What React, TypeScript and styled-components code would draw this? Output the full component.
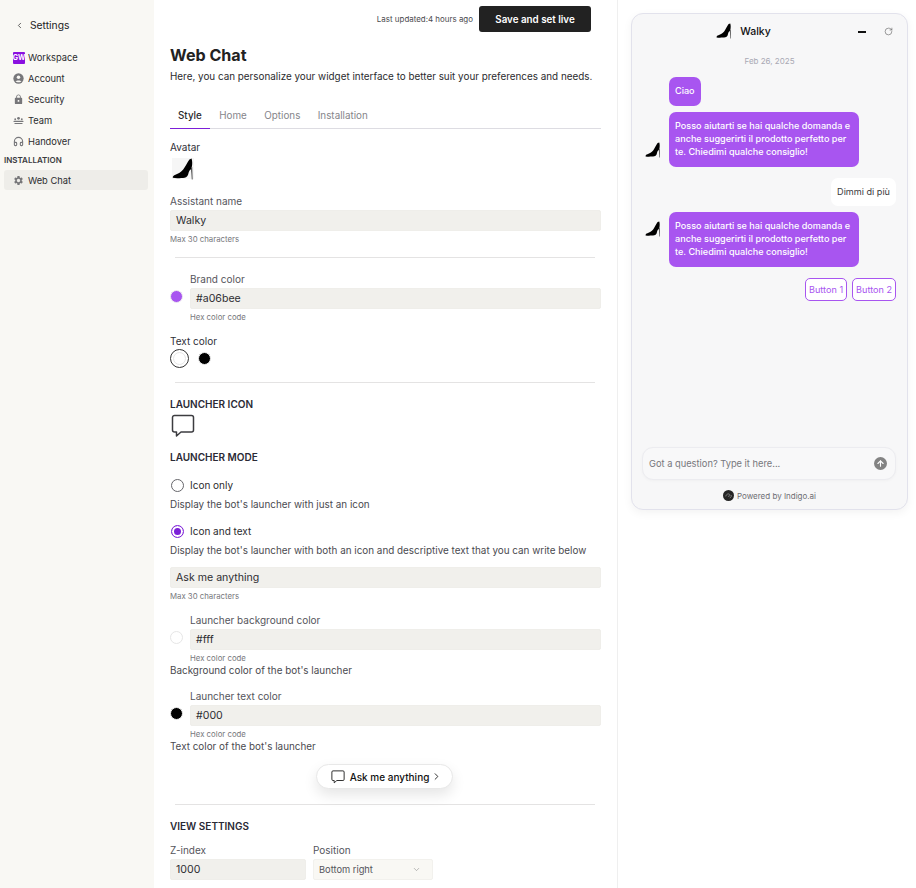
import React from 'react'
import styled, { createGlobalStyle } from 'styled-components'
import { ChevronDown, ChevronLeft, ChevronRight, Headphones, ArrowUp, RotateCw } from 'lucide-react'
import { MdLock, MdSettings } from 'react-icons/md'

const GlobalStyle = createGlobalStyle`
  html, body {
    margin: 0;
    padding: 0;
    height: 888px;
    overflow: hidden;
    background: #fff;
    font-family: Inter, "Liberation Sans", sans-serif;
    color: #1d1d1f;
  }
  * { box-sizing: border-box; }
`

function Heel({ size = 22 }: { size?: number }): JSX.Element {
  return (
    <svg width={size} height={size} viewBox="0 0 22 22">
      <path
        fill="#000"
        d="M0.8 19.8 C0.5 18.2 1.8 17.4 3.4 16.8 C6.4 15.6 9 14.4 11.2 11.6 C13.2 8.8 15.2 4.6 17.4 1.4 L19.6 0.6 C20.4 3.4 20.4 6.4 19.8 9 L18.8 11.4 C17.6 11.8 16.8 13.4 16.4 15.6 C16 18 14.8 19.4 12.6 19.7 C9.4 20.1 4.2 20.6 0.8 19.8 Z"
      />
      <path fill="#444" d="M19 10 L20.2 9 L20.6 21.4 L19.8 21.4 Z" />
    </svg>
  )
}

function ChatIcon({ size, stroke, width }: { size: number; stroke: string; width: number }): JSX.Element {
  return (
    <svg width={size} height={size} viewBox="0 0 24 24" fill="none" stroke={stroke} strokeWidth={width} strokeLinejoin="round">
      <path d="M3.5 1.5 H20.5 A2 2 0 0 1 22.5 3.5 V16 A2 2 0 0 1 20.5 18 H10 L5.5 22 V18 H3.5 A2 2 0 0 1 1.5 16 V3.5 A2 2 0 0 1 3.5 1.5 Z" />
    </svg>
  )
}

function AccountIcon(): JSX.Element {
  return (
    <svg width="11" height="11" viewBox="0 0 12 12">
      <circle cx="6" cy="6" r="5.6" fill="#77777a" />
      <circle cx="6" cy="4.6" r="1.9" fill="#f9f8f4" />
      <path d="M2.8 9.4 C3.6 7.6 8.4 7.6 9.2 9.4 C8.2 10.5 3.8 10.5 2.8 9.4 Z" fill="#f9f8f4" />
    </svg>
  )
}

function TeamIcon(): JSX.Element {
  return (
    <svg width="11" height="11" viewBox="0 0 12 12" fill="#77777a">
      <circle cx="6" cy="3.6" r="1.5" />
      <circle cx="2.4" cy="4.6" r="1" />
      <circle cx="9.6" cy="4.6" r="1" />
      <rect x="0.5" y="6.4" width="11" height="1.1" rx="0.5" />
      <rect x="1.5" y="8.6" width="9" height="1.1" rx="0.5" />
    </svg>
  )
}

function IndigoLogo(): JSX.Element {
  return (
    <svg width="11" height="11" viewBox="0 0 12 12">
      <circle cx="6" cy="6" r="6" fill="#262626" />
      <path d="M3 7 C3.4 4.4 6.4 3.4 7.4 5.2 C8 6.4 6.2 7.6 5.4 6.4 M7.4 8.6 C8.6 8.2 9.4 7 9 5.6" fill="none" stroke="#9a9a9a" strokeWidth="0.8" />
    </svg>
  )
}

const navItems = [
  { label: 'Account', icon: <AccountIcon /> },
  { label: 'Security', icon: <MdLock size={13} color="#77777a" /> },
  { label: 'Team', icon: <TeamIcon /> },
  { label: 'Handover', icon: <Headphones size={11} color="#77777a" strokeWidth={2.4} /> },
]

function ColorField({ color, label, value, ring }: { color: string; label: string; value: string; ring?: boolean }): JSX.Element {
  return (
    <S.ColorRow>
      <S.Dot color={color} ring={ring} />
      <S.ColorBody>
        <S.Label>{label}</S.Label>
        <S.Input>{value}</S.Input>
        <S.Hint>Hex color code</S.Hint>
      </S.ColorBody>
    </S.ColorRow>
  )
}

function App(): JSX.Element {
  return (
    <S.Page>
      <GlobalStyle />
      <S.Sidebar>
        <S.Back>
          <ChevronLeft size={9} color="#333" strokeWidth={2} />
          Settings
        </S.Back>
        <S.NavList>
          <S.NavItem>
            <S.Badge>GW</S.Badge>
            Workspace
          </S.NavItem>
          {navItems.map(item => (
            <S.NavItem key={item.label}>
              <S.NavIcon>{item.icon}</S.NavIcon>
              {item.label}
            </S.NavItem>
          ))}
        </S.NavList>
        <S.NavGroup>INSTALLATION</S.NavGroup>
        <S.ActiveItem>
          <S.NavIcon>
            <MdSettings size={13} color="#77777a" />
          </S.NavIcon>
          Web Chat
        </S.ActiveItem>
      </S.Sidebar>

      <S.Main>
        <S.TopBar>
          <S.Updated>Last updated:4 hours ago</S.Updated>
          <S.SaveButton type="button">Save and set live</S.SaveButton>
        </S.TopBar>
        <S.Title>Web Chat</S.Title>
        <S.Subtitle>Here, you can personalize your widget interface to better suit your preferences and needs.</S.Subtitle>
        <S.Tabs>
          <S.Tab active>Style</S.Tab>
          <S.Tab>Home</S.Tab>
          <S.Tab>Options</S.Tab>
          <S.Tab>Installation</S.Tab>
        </S.Tabs>

        <S.AvatarLabel>Avatar</S.AvatarLabel>
        <S.AvatarBox>
          <Heel />
        </S.AvatarBox>
        <S.NameLabel>Assistant name</S.NameLabel>
        <S.Input>Walky</S.Input>
        <S.Hint>Max 30 characters</S.Hint>
        <S.Divider top={12} bottom={14} />

        <ColorField color="#a855f0" label="Brand color" value="#a06bee" />
        <S.TextColorLabel>Text color</S.TextColorLabel>
        <S.Swatches>
          <S.SelectedSwatch>
            <S.Dot color="#fff" ring />
          </S.SelectedSwatch>
          <S.Dot color="#000" />
        </S.Swatches>
        <S.Divider top={14} bottom={14} />

        <S.Heading>LAUNCHER ICON</S.Heading>
        <S.LauncherIcon>
          <ChatIcon size={24} stroke="#3c3c40" width={1.5} />
        </S.LauncherIcon>
        <S.Heading>LAUNCHER MODE</S.Heading>
        <S.RadioRow first>
          <S.Radio />
          Icon only
        </S.RadioRow>
        <S.Help>Display the bot's launcher with just an icon</S.Help>
        <S.RadioRow>
          <S.Radio checked />
          Icon and text
        </S.RadioRow>
        <S.Help>Display the bot's launcher with both an icon and descriptive text that you can write below</S.Help>
        <S.InputGap />
        <S.Input>Ask me anything</S.Input>
        <S.Hint>Max 30 characters</S.Hint>

        <S.ColorGap size={11} />
        <ColorField color="#fff" label="Launcher background color" value="#fff" ring />
        <S.Help tight>Background color of the bot's launcher</S.Help>
        <S.ColorGap size={12} />
        <ColorField color="#000" label="Launcher text color" value="#000" />
        <S.Help tight>Text color of the bot's launcher</S.Help>

        <S.LauncherWrap>
          <S.Launcher>
            <ChatIcon size={14} stroke="#222" width={1.6} />
            <span>Ask me anything</span>
            <ChevronRight size={11} color="#222" strokeWidth={2} />
          </S.Launcher>
        </S.LauncherWrap>
        <S.Divider top={15} bottom={14} />
        <S.Heading>VIEW SETTINGS</S.Heading>
        <S.ViewRow>
          <S.ZField>
            <S.Label>Z-index</S.Label>
            <S.Input>1000</S.Input>
          </S.ZField>
          <S.PositionField>
            <S.Label>Position</S.Label>
            <S.Select>
              Bottom right
              <ChevronDown size={9} color="#888" strokeWidth={1.5} />
            </S.Select>
          </S.PositionField>
        </S.ViewRow>
      </S.Main>

      <S.Preview>
        <S.Widget>
          <S.WidgetHeader>
            <S.HeaderBrand>
              <Heel size={16} />
              Walky
            </S.HeaderBrand>
            <S.HeaderActions>
              <S.Minimize />
              <RotateCw size={9} color="#555" strokeWidth={1.5} />
            </S.HeaderActions>
          </S.WidgetHeader>
          <S.Date>Feb 26, 2025</S.Date>
          <S.Messages>
            <S.BotRow>
              <S.BotBubble>Ciao</S.BotBubble>
            </S.BotRow>
            <S.BotRow>
              <S.BotAvatar offset={9}>
                <Heel size={16} />
              </S.BotAvatar>
              <S.BotBubble>
                Posso aiutarti se hai qualche domanda e anche suggerirti il prodotto perfetto per te. Chiedimi qualche consiglio!
              </S.BotBubble>
            </S.BotRow>
            <S.UserBubble>Dimmi di più</S.UserBubble>
            <S.BotRow>
              <S.BotAvatar offset={30}>
                <Heel size={16} />
              </S.BotAvatar>
              <S.BotBubble>
                Posso aiutarti se hai qualche domanda e anche suggerirti il prodotto perfetto per te. Chiedimi qualche consiglio!
              </S.BotBubble>
            </S.BotRow>
            <S.Buttons>
              <S.ChatButton>Button 1</S.ChatButton>
              <S.ChatButton>Button 2</S.ChatButton>
            </S.Buttons>
          </S.Messages>
          <S.Composer>
            Got a question? Type it here...
            <S.SendButton>
              <ArrowUp size={9} color="#fff" strokeWidth={3} />
            </S.SendButton>
          </S.Composer>
          <S.Powered>
            <IndigoLogo />
            Powered by Indigo.ai
          </S.Powered>
        </S.Widget>
      </S.Preview>
    </S.Page>
  )
}

const S = {
  Page: styled.div`
    display: flex;
    width: 916px;
    height: 888px;
    overflow: hidden;
  `,
  Sidebar: styled.aside`
    flex: 0 0 154px;
    background: #f9f8f4;
    padding: 17px 6px 0 4px;
  `,
  Back: styled.div`
    display: flex;
    align-items: center;
    gap: 6px;
    height: 16px;
    padding-left: 11px;
    font-size: 10.3px;
    color: #222;
  `,
  NavList: styled.div`
    margin-top: 14px;
  `,
  NavItem: styled.div`
    display: flex;
    align-items: center;
    gap: 3px;
    height: 21px;
    padding-left: 9px;
    font-size: 9.3px;
    color: #2b2b2e;
  `,
  Badge: styled.span`
    display: inline-flex;
    align-items: center;
    justify-content: center;
    width: 12px;
    height: 12px;
    border-radius: 1px;
    background: #8a10e0;
    color: #fff;
    font-size: 7px;
    font-weight: 700;
  `,
  NavIcon: styled.span`
    display: inline-flex;
    align-items: center;
    justify-content: center;
    width: 11px;
    margin-right: 1px;
  `,
  NavGroup: styled.div`
    height: 11px;
    line-height: 11px;
    margin-top: 3px;
    font-size: 8px;
    font-weight: 600;
    color: #3b3b40;
  `,
  ActiveItem: styled.div`
    display: flex;
    align-items: center;
    gap: 3px;
    height: 20px;
    margin-top: 4px;
    padding-left: 9px;
    border-radius: 3px;
    background: #eeede9;
    font-size: 9.3px;
    color: #2b2b2e;
  `,
  Main: styled.main`
    flex: 0 0 464px;
    padding: 0 16px;
    border-right: 1px solid #efefef;
    overflow: hidden;
  `,
  TopBar: styled.div`
    display: flex;
    align-items: center;
    justify-content: flex-end;
    gap: 6px;
    height: 26px;
    margin-top: 6px;
    padding-right: 10px;
  `,
  Updated: styled.span`
    font-size: 7.95px;
    color: #4b4b4f;
  `,
  SaveButton: styled.button`
    width: 112px;
    height: 26px;
    border: 0;
    border-radius: 3px;
    background: #222222;
    color: #fff;
    font-family: inherit;
    font-size: 9.8px;
    font-weight: 600;
  `,
  Title: styled.h1`
    margin: 12px 0 0;
    height: 22px;
    font-size: 16.1px;
    line-height: 22px;
    font-weight: 700;
    color: #222;
  `,
  Subtitle: styled.p`
    margin: 2px 0 0;
    height: 16px;
    font-size: 9.9px;
    line-height: 16px;
    color: #2b2b2e;
    white-space: nowrap;
  `,
  Tabs: styled.div`
    display: flex;
    height: 26px;
    margin-top: 19px;
    border-bottom: 1px solid #dddce2;
  `,
  Tab: styled.div<{ active?: boolean }>`
    height: 26px;
    padding: 0 8px;
    margin-right: 1.4px;
    font-size: 9.85px;
    line-height: 24px;
    font-weight: ${p => (p.active ? 500 : 400)};
    color: ${p => (p.active ? '#2b2b2e' : '#85858a')};
    border-bottom: ${p => (p.active ? '1px solid #7c1fd8' : '0')};
  `,
  AvatarLabel: styled.div`
    height: 14px;
    margin-top: 11px;
    font-size: 10px;
    line-height: 14px;
    color: #2f2f38;
  `,
  AvatarBox: styled.div`
    display: flex;
    align-items: center;
    justify-content: center;
    width: 22px;
    height: 21px;
    margin: 4px 0 0 2px;
    background: #f6f6f6;
  `,
  NameLabel: styled.div`
    height: 14px;
    margin-top: 15px;
    font-size: 10px;
    line-height: 14px;
    color: #55555c;
  `,
  Label: styled.div`
    height: 14px;
    font-size: 10px;
    line-height: 14px;
    color: #55555c;
  `,
  Input: styled.div`
    height: 21px;
    margin-top: 2px;
    padding-left: 5px;
    border: 1px solid #efeeea;
    border-radius: 2px;
    background: #f1f0ec;
    font-size: 10.6px;
    line-height: 19px;
    color: #2e2e32;
  `,
  Hint: styled.div`
    height: 12px;
    margin-top: 2px;
    font-size: 7.8px;
    line-height: 12px;
    color: #77777c;
  `,
  Divider: styled.hr<{ top: number; bottom: number }>`
    height: 1px;
    margin: ${p => p.top}px 6px ${p => p.bottom}px 5px;
    border: 0;
    background: #e4e3e3;
  `,
  ColorRow: styled.div`
    display: flex;
    align-items: center;
    gap: 7px;
    & > span {
      margin-bottom: 3px;
    }
  `,
  ColorBody: styled.div`
    flex: 1;
  `,
  Dot: styled.span<{ color: string; ring?: boolean }>`
    display: block;
    flex: 0 0 13px;
    width: 13px;
    height: 13px;
    border-radius: 50%;
    background: ${p => p.color};
    border: 1px solid ${p => (p.ring ? '#e6e6e6' : '#eee')};
  `,
  TextColorLabel: styled.div`
    height: 14px;
    margin-top: 11px;
    font-size: 10px;
    line-height: 14px;
    color: #2f2f38;
  `,
  Swatches: styled.div`
    display: flex;
    align-items: center;
    gap: 9px;
    margin-top: 1px;
  `,
  SelectedSwatch: styled.span`
    display: flex;
    align-items: center;
    justify-content: center;
    width: 19px;
    height: 19px;
    border: 1px solid #333;
    border-radius: 50%;
  `,
  Heading: styled.div`
    height: 14px;
    font-size: 10px;
    line-height: 14px;
    font-weight: 600;
    color: #2a2a35;
  `,
  LauncherIcon: styled.div`
    display: flex;
    height: 32px;
    margin: 3px 0 4px 1px;
  `,
  RadioRow: styled.div<{ first?: boolean }>`
    display: flex;
    align-items: center;
    gap: 6px;
    height: 16px;
    margin-top: ${p => (p.first ? '13px' : '12px')};
    font-size: 10px;
    color: #2b2b2e;
  `,
  Radio: styled.span<{ checked?: boolean }>`
    width: 13px;
    height: 13px;
    margin-left: 1px;
    border-radius: 50%;
    background: #fff;
    border: ${p => (p.checked ? '1px solid #7c1fd8' : '1px solid #66666b')};
    box-shadow: ${p => (p.checked ? 'inset 0 0 0 2px #fff, inset 0 0 0 7px #7c1fd8' : 'none')};
  `,
  Help: styled.div<{ tight?: boolean }>`
    height: 14px;
    margin-top: ${p => (p.tight ? '-1px' : '4px')};
    font-size: 9.9px;
    line-height: 14px;
    color: #4a4a4f;
    white-space: nowrap;
  `,
  InputGap: styled.div`
    height: 8px;
  `,
  ColorGap: styled.div<{ size: number }>`
    height: ${p => p.size}px;
  `,
  LauncherWrap: styled.div`
    display: flex;
    justify-content: center;
    margin-top: 11px;
    padding-right: 2px;
  `,
  Launcher: styled.div`
    display: flex;
    align-items: center;
    gap: 5px;
    height: 25px;
    padding: 0 10px 0 14px;
    border: 1px solid #e8e8e8;
    border-radius: 13px;
    background: #fff;
    box-shadow: 0 6px 14px rgba(0, 0, 0, 0.1);
    font-size: 10px;
    font-weight: 500;
    color: #111;
    & > span {
      margin-right: -3px;
    }
  `,
  ViewRow: styled.div`
    display: flex;
    gap: 7px;
    margin-top: 10px;
  `,
  ZField: styled.div`
    width: 136px;
  `,
  PositionField: styled.div`
    width: 120px;
  `,
  Select: styled.div`
    display: flex;
    align-items: center;
    justify-content: space-between;
    height: 21px;
    margin-top: 2px;
    padding: 0 11px 0 5px;
    border: 1px solid #f2f1ed;
    border-radius: 2px;
    background: #f9f8f4;
    font-size: 9.3px;
    color: #55555c;
  `,
  Preview: styled.section`
    flex: 1;
    padding: 13px 8px 0 13px;
  `,
  Widget: styled.div`
    display: flex;
    flex-direction: column;
    height: 497px;
    border: 1px solid #e2e2ec;
    border-radius: 12px;
    background: #f7f7f8;
    box-shadow: 0 3px 10px rgba(0, 0, 0, 0.05);
  `,
  WidgetHeader: styled.div`
    position: relative;
    display: flex;
    align-items: center;
    justify-content: center;
    height: 34px;
    padding-right: 52px;
  `,
  HeaderBrand: styled.div`
    display: flex;
    align-items: center;
    gap: 8px;
    font-size: 10.5px;
    font-weight: 500;
    color: #111;
  `,
  HeaderActions: styled.div`
    position: absolute;
    right: 14px;
    top: 13px;
    display: flex;
    align-items: center;
    gap: 18px;
  `,
  Minimize: styled.span`
    width: 8px;
    height: 2px;
    background: #111;
  `,
  Date: styled.div`
    height: 12px;
    margin-top: 7px;
    font-size: 8px;
    line-height: 12px;
    text-align: center;
    color: #a9a9b4;
  `,
  Messages: styled.div`
    flex: 1;
    display: flex;
    flex-direction: column;
    gap: 6px;
    padding: 10px 11px 0 37px;
  `,
  BotRow: styled.div`
    position: relative;
  `,
  BotAvatar: styled.span<{ offset: number }>`
    position: absolute;
    left: -24px;
    bottom: ${p => p.offset}px;
    width: 16px;
    height: 16px;
  `,
  BotBubble: styled.div`
    width: fit-content;
    max-width: 190px;
    padding: 8px 6px 8.6px;
    border-radius: 7px;
    background: #a855f0;
    color: #fff;
    font-size: 9.1px;
    font-weight: 500;
    line-height: 12.8px;
  `,
  UserBubble: styled.div`
    align-self: flex-end;
    margin-top: 5px;
    padding: 7px 6px;
    border-radius: 7px;
    background: #fff;
    color: #3c3c40;
    font-size: 9.1px;
    line-height: 14px;
  `,
  Buttons: styled.div`
    display: flex;
    justify-content: flex-end;
    gap: 5px;
    margin-top: 5px;
  `,
  ChatButton: styled.div`
    height: 23px;
    padding: 0 3px;
    border: 1px solid #a855f0;
    border-radius: 5px;
    background: #fff;
    color: #a855f0;
    font-size: 9.1px;
    line-height: 21px;
  `,
  Composer: styled.div`
    display: flex;
    align-items: center;
    justify-content: space-between;
    height: 33px;
    margin: 0 11px 0 10px;
    padding: 0 8px 0 6px;
    border: 1px solid #ececf0;
    border-radius: 11px;
    background: #f8f8f9;
    font-size: 9.3px;
    color: #77777c;
    box-shadow: 0 1px 3px rgba(0, 0, 0, 0.03);
  `,
  SendButton: styled.span`
    display: flex;
    align-items: center;
    justify-content: center;
    width: 13px;
    height: 13px;
    border-radius: 50%;
    background: #838383;
  `,
  Powered: styled.div`
    display: flex;
    align-items: center;
    justify-content: center;
    gap: 3px;
    height: 27px;
    margin-top: 2px;
    font-size: 8px;
    color: #6e6e73;
  `,
}

export default App
